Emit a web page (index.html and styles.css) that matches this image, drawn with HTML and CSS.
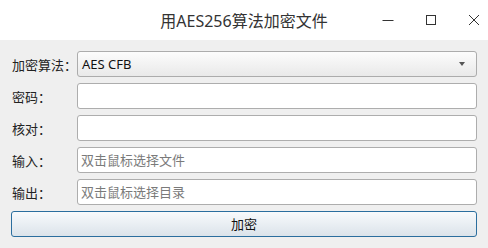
FILE: index.html
```html
<!DOCTYPE html>
<html lang="zh-CN">

<head>
    <meta charset="UTF-8">
    <title>用AES256算法加密文件</title>
    <link rel="stylesheet" href="styles.css">
</head>

<body>
    <div class="window">
        <!-- Title Bar -->
        <div class="titlebar">
            <span class="title">用AES256算法加密文件</span>
            <div class="controls">
                <svg class="ctl" width="14" height="14" viewBox="0 0 14 14"><path d="M1.5 7.5h11" stroke="#333" stroke-width="1" fill="none"/></svg>
                <svg class="ctl" width="14" height="14" viewBox="0 0 14 14"><rect x="2.5" y="2.5" width="9" height="9" stroke="#333" stroke-width="1" fill="none"/></svg>
                <svg class="ctl" width="14" height="14" viewBox="0 0 14 14"><path d="M2 2l10 10M12 2L2 12" stroke="#333" stroke-width="1" fill="none"/></svg>
            </div>
        </div>

        <!-- Form -->
        <div class="form">
            <label class="label">加密算法：</label>
            <div class="combo">
                <span>AES CFB</span>
                <span class="arrow"></span>
            </div>

            <label class="label">密码：</label>
            <input class="field" type="password">

            <label class="label">核对：</label>
            <input class="field" type="password">

            <label class="label">输入：</label>
            <input class="field" type="text" placeholder="双击鼠标选择文件">

            <label class="label">输出：</label>
            <input class="field" type="text" placeholder="双击鼠标选择目录">

            <button class="encryptBtn">加密</button>
        </div>
    </div>
</body>

</html>
```

FILE: styles.css
```css
/* styles.css */
body {
    margin: 0;
    padding: 0;
    font-family: "Noto Sans", "Noto Sans CJK SC", sans-serif;
}

.window {
    width: 488px;
    height: 248px;
    background-color: #efefef;
    overflow: hidden;
}

.titlebar {
    height: 40px;
    background-color: #ffffff;
    display: flex;
    align-items: center;
    justify-content: center;
    position: relative;
}

.title {
    font-size: 16px;
    color: #333333;
}

.controls {
    position: absolute;
    right: 7px;
    top: 13px;
    display: flex;
    gap: 29px;
}

.ctl {
    display: block;
}

.form {
    display: grid;
    grid-template-columns: 66px 400px;
    grid-auto-rows: 26px;
    row-gap: 6px;
    padding: 11px 11px 0 11px;
}

.label {
    font-size: 13px;
    color: #222222;
    display: flex;
    align-items: center;
    padding-left: 1px;
}

.combo {
    box-sizing: border-box;
    border: 1px solid #acacac;
    border-radius: 3px;
    background: linear-gradient(#fcfcfc, #e9e9e9);
    display: flex;
    align-items: center;
    justify-content: space-between;
    padding: 0 11px 0 4px;
    font-size: 13px;
    color: #111111;
}

.arrow {
    width: 0;
    height: 0;
    border-left: 3.5px solid transparent;
    border-right: 3.5px solid transparent;
    border-top: 4px solid #555555;
}

.field {
    box-sizing: border-box;
    height: 26px;
    margin: 0;
    border: 1px solid #adadad;
    border-radius: 3px;
    background-color: #ffffff;
    padding: 0 3px;
    font-family: "Noto Sans", "Noto Sans CJK SC", sans-serif;
    font-size: 13px;
    outline: none;
}

.field::placeholder {
    color: #7a7a7a;
}

.encryptBtn {
    grid-column: 1 / 3;
    box-sizing: border-box;
    margin: 0;
    border: 1px solid #2b6e9e;
    border-radius: 3px;
    background: linear-gradient(#f8fafc, #dbe3ea);
    font-family: "Noto Sans", "Noto Sans CJK SC", sans-serif;
    font-size: 13px;
    color: #111111;
    padding: 0 0 2px 0;
}
```
